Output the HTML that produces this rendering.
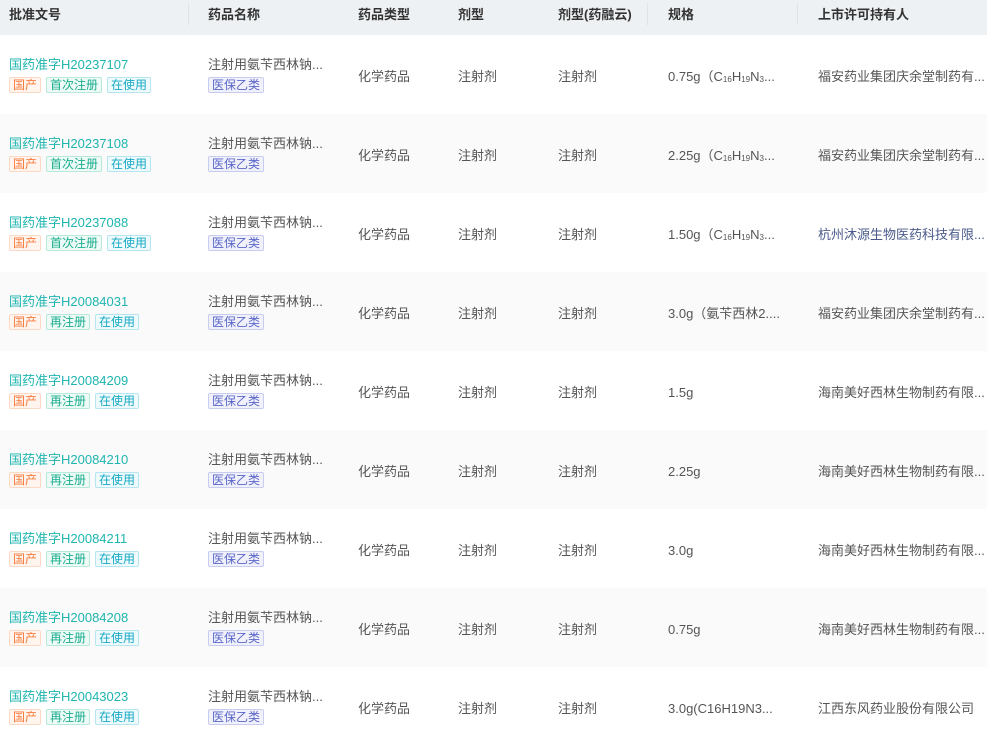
<!DOCTYPE html>
<html><head><meta charset="utf-8"><style>
*{margin:0;padding:0;box-sizing:border-box}
body{width:987px;height:733px;overflow:hidden;background:#fff;font-family:"Liberation Sans","Noto Sans CJK SC",sans-serif;font-size:13px;color:#555}
.hd{position:absolute;left:0;top:0;width:987px;height:35px;background:#eef1f3}
.hd div{position:absolute;top:0;line-height:30px;font-weight:bold;color:#333;font-size:13px}
.sep{position:absolute;top:3px;width:1px;height:22px;background:#dde3e6}
.row{position:absolute;left:0;width:987px;height:79px}
.row.alt{background:#fafafa}
.c{position:absolute;top:2px;line-height:79px;white-space:nowrap;color:#555}
.link{position:absolute;left:9px;top:22px;color:#1fb5b0;font-size:13px;line-height:16px}
.tags{position:absolute;top:42px;height:16px;display:flex;gap:5px}
.t{font-size:12px;line-height:14px;height:16px;padding:0 3px;border:1px solid;border-radius:2px}
.o{color:#fa7a3c;background:#fff5ee;border-color:#fcd9c4}
.g{color:#1aad8f;background:#eefaf6;border-color:#b8e8da}
.cy{color:#17a9c4;background:#eefafc;border-color:#b5e5ef}
.b{color:#5a66c9;background:#f0f1fb;border-color:#c8cdf0}
.nm{position:absolute;left:208px;top:22px;line-height:16px}
sub{font-size:8px;vertical-align:-1px}
</style></head><body>
<div class="hd">
<div style="left:9px">批准文号</div>
<div style="left:208px">药品名称</div>
<div style="left:358px">药品类型</div>
<div style="left:458px">剂型</div>
<div style="left:558px">剂型(药融云)</div>
<div style="left:668px">规格</div>
<div style="left:818px">上市许可持有人</div>
<span class="sep" style="left:188px"></span><span class="sep" style="left:647px"></span><span class="sep" style="left:797px"></span>
</div>

<div class="row" style="top:35px"><div class="link">国药准字H20237107</div><div class="tags" style="left:9px"><span class="t o">国产</span><span class="t g">首次注册</span><span class="t cy">在使用</span></div><div class="nm">注射用氨苄西林钠...</div><div class="tags" style="left:208px"><span class="t b">医保乙类</span></div><div class="c" style="left:358px">化学药品</div><div class="c" style="left:458px">注射剂</div><div class="c" style="left:558px">注射剂</div><div class="c" style="left:668px">0.75g（C<sub>16</sub>H<sub>19</sub>N<sub>3</sub>...</div><div class="c" style="left:818px">福安药业集团庆余堂制药有...</div></div>

<div class="row alt" style="top:114px"><div class="link">国药准字H20237108</div><div class="tags" style="left:9px"><span class="t o">国产</span><span class="t g">首次注册</span><span class="t cy">在使用</span></div><div class="nm">注射用氨苄西林钠...</div><div class="tags" style="left:208px"><span class="t b">医保乙类</span></div><div class="c" style="left:358px">化学药品</div><div class="c" style="left:458px">注射剂</div><div class="c" style="left:558px">注射剂</div><div class="c" style="left:668px">2.25g（C<sub>16</sub>H<sub>19</sub>N<sub>3</sub>...</div><div class="c" style="left:818px">福安药业集团庆余堂制药有...</div></div>

<div class="row" style="top:193px"><div class="link">国药准字H20237088</div><div class="tags" style="left:9px"><span class="t o">国产</span><span class="t g">首次注册</span><span class="t cy">在使用</span></div><div class="nm">注射用氨苄西林钠...</div><div class="tags" style="left:208px"><span class="t b">医保乙类</span></div><div class="c" style="left:358px">化学药品</div><div class="c" style="left:458px">注射剂</div><div class="c" style="left:558px">注射剂</div><div class="c" style="left:668px">1.50g（C<sub>16</sub>H<sub>19</sub>N<sub>3</sub>...</div><div class="c" style="left:818px;color:#4a5a8a">杭州沐源生物医药科技有限...</div></div>

<div class="row alt" style="top:272px"><div class="link">国药准字H20084031</div><div class="tags" style="left:9px"><span class="t o">国产</span><span class="t g">再注册</span><span class="t cy">在使用</span></div><div class="nm">注射用氨苄西林钠...</div><div class="tags" style="left:208px"><span class="t b">医保乙类</span></div><div class="c" style="left:358px">化学药品</div><div class="c" style="left:458px">注射剂</div><div class="c" style="left:558px">注射剂</div><div class="c" style="left:668px">3.0g（氨苄西林2....</div><div class="c" style="left:818px">福安药业集团庆余堂制药有...</div></div>

<div class="row" style="top:351px"><div class="link">国药准字H20084209</div><div class="tags" style="left:9px"><span class="t o">国产</span><span class="t g">再注册</span><span class="t cy">在使用</span></div><div class="nm">注射用氨苄西林钠...</div><div class="tags" style="left:208px"><span class="t b">医保乙类</span></div><div class="c" style="left:358px">化学药品</div><div class="c" style="left:458px">注射剂</div><div class="c" style="left:558px">注射剂</div><div class="c" style="left:668px">1.5g</div><div class="c" style="left:818px">海南美好西林生物制药有限...</div></div>

<div class="row alt" style="top:430px"><div class="link">国药准字H20084210</div><div class="tags" style="left:9px"><span class="t o">国产</span><span class="t g">再注册</span><span class="t cy">在使用</span></div><div class="nm">注射用氨苄西林钠...</div><div class="tags" style="left:208px"><span class="t b">医保乙类</span></div><div class="c" style="left:358px">化学药品</div><div class="c" style="left:458px">注射剂</div><div class="c" style="left:558px">注射剂</div><div class="c" style="left:668px">2.25g</div><div class="c" style="left:818px">海南美好西林生物制药有限...</div></div>

<div class="row" style="top:509px"><div class="link">国药准字H20084211</div><div class="tags" style="left:9px"><span class="t o">国产</span><span class="t g">再注册</span><span class="t cy">在使用</span></div><div class="nm">注射用氨苄西林钠...</div><div class="tags" style="left:208px"><span class="t b">医保乙类</span></div><div class="c" style="left:358px">化学药品</div><div class="c" style="left:458px">注射剂</div><div class="c" style="left:558px">注射剂</div><div class="c" style="left:668px">3.0g</div><div class="c" style="left:818px">海南美好西林生物制药有限...</div></div>

<div class="row alt" style="top:588px"><div class="link">国药准字H20084208</div><div class="tags" style="left:9px"><span class="t o">国产</span><span class="t g">再注册</span><span class="t cy">在使用</span></div><div class="nm">注射用氨苄西林钠...</div><div class="tags" style="left:208px"><span class="t b">医保乙类</span></div><div class="c" style="left:358px">化学药品</div><div class="c" style="left:458px">注射剂</div><div class="c" style="left:558px">注射剂</div><div class="c" style="left:668px">0.75g</div><div class="c" style="left:818px">海南美好西林生物制药有限...</div></div>

<div class="row" style="top:667px"><div class="link">国药准字H20043023</div><div class="tags" style="left:9px"><span class="t o">国产</span><span class="t g">再注册</span><span class="t cy">在使用</span></div><div class="nm">注射用氨苄西林钠...</div><div class="tags" style="left:208px"><span class="t b">医保乙类</span></div><div class="c" style="left:358px">化学药品</div><div class="c" style="left:458px">注射剂</div><div class="c" style="left:558px">注射剂</div><div class="c" style="left:668px">3.0g(C16H19N3...</div><div class="c" style="left:818px">江西东风药业股份有限公司</div></div>
</body></html>
